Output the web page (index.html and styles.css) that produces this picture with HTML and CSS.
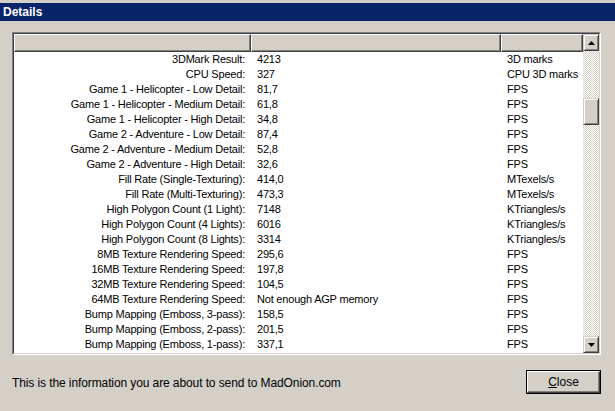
FILE: index.html
```html
<!DOCTYPE html>
<html>
<head>
<meta charset="utf-8">
<link rel="stylesheet" href="styles.css">
</head>
<body>
<div class="dialog">
  <div class="titlebar">Details</div>
  <div class="listbox">
    <div class="listinner">
      <div class="listcontent">
        <div class="header">
          <div class="hcell"></div>
          <div class="hcell"></div>
          <div class="hcell"></div>
        </div>
        <div class="rows">
          <div class="row"><span class="c1">3DMark Result:</span><span class="c2">4213</span><span class="c3">3D marks</span></div>
          <div class="row"><span class="c1">CPU Speed:</span><span class="c2">327</span><span class="c3">CPU 3D marks</span></div>
          <div class="row"><span class="c1">Game 1 - Helicopter - Low Detail:</span><span class="c2">81,7</span><span class="c3">FPS</span></div>
          <div class="row"><span class="c1">Game 1 - Helicopter - Medium Detail:</span><span class="c2">61,8</span><span class="c3">FPS</span></div>
          <div class="row"><span class="c1">Game 1 - Helicopter - High Detail:</span><span class="c2">34,8</span><span class="c3">FPS</span></div>
          <div class="row"><span class="c1">Game 2 - Adventure - Low Detail:</span><span class="c2">87,4</span><span class="c3">FPS</span></div>
          <div class="row"><span class="c1">Game 2 - Adventure - Medium Detail:</span><span class="c2">52,8</span><span class="c3">FPS</span></div>
          <div class="row"><span class="c1">Game 2 - Adventure - High Detail:</span><span class="c2">32,6</span><span class="c3">FPS</span></div>
          <div class="row"><span class="c1">Fill Rate (Single-Texturing):</span><span class="c2">414,0</span><span class="c3">MTexels/s</span></div>
          <div class="row"><span class="c1">Fill Rate (Multi-Texturing):</span><span class="c2">473,3</span><span class="c3">MTexels/s</span></div>
          <div class="row"><span class="c1">High Polygon Count (1 Light):</span><span class="c2">7148</span><span class="c3">KTriangles/s</span></div>
          <div class="row"><span class="c1">High Polygon Count (4 Lights):</span><span class="c2">6016</span><span class="c3">KTriangles/s</span></div>
          <div class="row"><span class="c1">High Polygon Count (8 Lights):</span><span class="c2">3314</span><span class="c3">KTriangles/s</span></div>
          <div class="row"><span class="c1">8MB Texture Rendering Speed:</span><span class="c2">295,6</span><span class="c3">FPS</span></div>
          <div class="row"><span class="c1">16MB Texture Rendering Speed:</span><span class="c2">197,8</span><span class="c3">FPS</span></div>
          <div class="row"><span class="c1">32MB Texture Rendering Speed:</span><span class="c2">104,5</span><span class="c3">FPS</span></div>
          <div class="row"><span class="c1">64MB Texture Rendering Speed:</span><span class="c2">Not enough AGP memory</span><span class="c3">FPS</span></div>
          <div class="row"><span class="c1">Bump Mapping (Emboss, 3-pass):</span><span class="c2">158,5</span><span class="c3">FPS</span></div>
          <div class="row"><span class="c1">Bump Mapping (Emboss, 2-pass):</span><span class="c2">201,5</span><span class="c3">FPS</span></div>
          <div class="row"><span class="c1">Bump Mapping (Emboss, 1-pass):</span><span class="c2">337,1</span><span class="c3">FPS</span></div>
        </div>
      </div>
      <div class="scrollbar">
        <div class="sbtn up"><svg width="7" height="4" viewBox="0 0 7 4"><path d="M3.5 0 L7 4 L0 4 Z" fill="#000"/></svg></div>
        <div class="track">
          <div class="thumb"></div>
        </div>
        <div class="sbtn down"><svg width="7" height="4" viewBox="0 0 7 4"><path d="M0 0 L7 0 L3.5 4 Z" fill="#000"/></svg></div>
      </div>
    </div>
  </div>
  <div class="footer">
    <span class="info">This is the information you are about to send to MadOnion.com</span>
    <div class="btn-outer"><div class="btn"><span class="btn-inner"><u>C</u>lose</span></div></div>
  </div>
</div>
</body>
</html>
```
FILE: styles.css
```css
html, body {
  margin: 0;
  padding: 0;
}
body {
  background: #d4d0c8;
  font-family: "Liberation Sans", Arial, sans-serif;
  color: #000;
  width: 615px;
  height: 411px;
  overflow: hidden;
}
.dialog {
  padding-top: 3px;
}
.titlebar {
  height: 18px;
  background: #0a246a;
  color: #fff;
  font-weight: bold;
  font-size: 12px;
  line-height: 18px;
  padding-left: 3px;
}
.listbox {
  margin: 11px 0 0 12px;
  width: 587px;
  height: 321px;
  border: 1px solid;
  border-color: #808080 #ffffff #ffffff #808080;
}
.listinner {
  height: 319px;
  border: 1px solid;
  border-color: #404040 #d4d0c8 #d4d0c8 #404040;
  background: #fff;
  display: flex;
}
.listcontent {
  flex: 1;
  display: flex;
  flex-direction: column;
  overflow: hidden;
}
.header {
  display: grid;
  grid-template-columns: 237px 250px 1fr;
  height: 18px;
  flex: none;
}
.hcell {
  background: #d4d0c8;
  box-sizing: border-box;
  border-top: 1px solid #fff;
  border-left: 1px solid #fff;
  border-right: 1px solid #404040;
  border-bottom: 1px solid #404040;
  box-shadow: inset -1px -1px 0 #808080;
}
.rows {
  font-size: 11px;
  letter-spacing: -0.2px;
}
.row {
  display: grid;
  grid-template-columns: 237px 250px 1fr;
  height: 15px;
  line-height: 15px;
  white-space: nowrap;
}
.c1 {
  text-align: right;
  padding-right: 6px;
}
.c2 {
  padding-left: 6px;
}
.c3 {
  padding-left: 6px;
}
.scrollbar {
  width: 16px;
  display: flex;
  flex-direction: column;
}
.sbtn {
  height: 17px;
  box-sizing: border-box;
  background: #d4d0c8;
  border: 1px solid;
  border-color: #d4d0c8 #404040 #404040 #d4d0c8;
  box-shadow: inset 1px 1px 0 #fff, inset -1px -1px 0 #808080;
  display: flex;
  align-items: center;
  justify-content: center;
  flex: none;
}
.sbtn svg {
  display: block;
}
.track {
  flex: 1;
  background: repeating-conic-gradient(#ffffff 0 25%, #d4d0c8 0 50%) 0 0 / 2px 2px;
  padding-top: 47px;
}
.thumb {
  height: 27px;
  box-sizing: border-box;
  background: #d4d0c8;
  border: 1px solid;
  border-color: #d4d0c8 #404040 #404040 #d4d0c8;
  box-shadow: inset 1px 1px 0 #fff, inset -1px -1px 0 #808080;
}
.footer {
  display: flex;
  align-items: center;
  justify-content: space-between;
  margin-top: 15px;
  padding-left: 12px;
  width: 589px;
}
.info {
  font-size: 12px;
  letter-spacing: -0.1px;
  margin-top: 1px;
}
.btn-outer {
  border: 1px solid #000;
  width: 73px;
  height: 22px;
}
.btn {
  box-sizing: border-box;
  height: 22px;
  background: #d4d0c8;
  border: 1px solid;
  border-color: #fff #404040 #404040 #fff;
  box-shadow: inset -1px -1px 0 #808080;
  display: flex;
  align-items: center;
  justify-content: center;
  font-size: 12px;
}
.btn-inner u {
  text-decoration: underline;
}
```
